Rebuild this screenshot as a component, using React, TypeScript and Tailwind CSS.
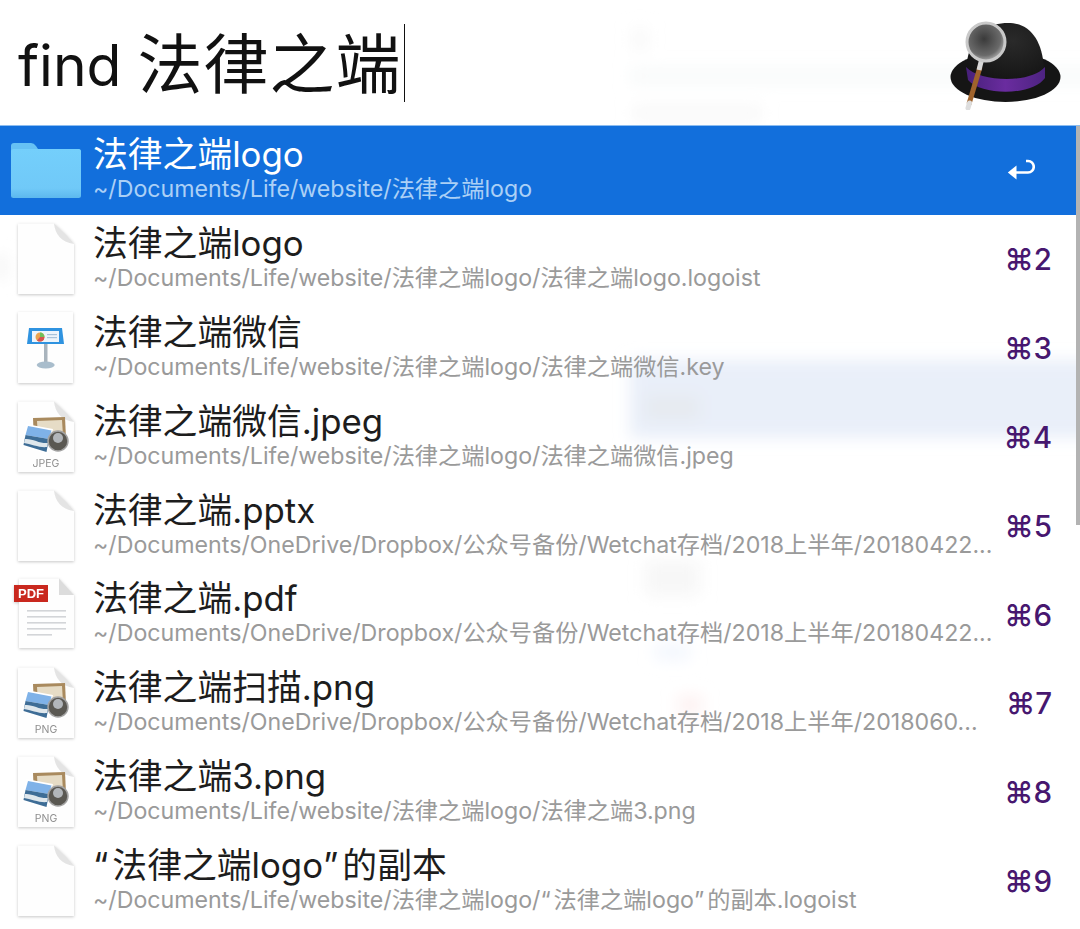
import React from 'react';

const FONT = '[font-family:Inter,"Noto_Sans_CJK_SC",sans-serif]';

type IconKind = 'folder' | 'blank' | 'keynote' | 'jpeg' | 'png' | 'pdf';

const rows: { icon: IconKind; title: React.ReactNode; path: React.ReactNode; key: string }[] = [
  { icon: 'folder', title: '法律之端logo', path: '~/Documents/Life/website/法律之端logo', key: '' },
  { icon: 'blank', title: '法律之端logo', path: '~/Documents/Life/website/法律之端logo/法律之端logo.logoist', key: '⌘2' },
  { icon: 'keynote', title: '法律之端微信', path: '~/Documents/Life/website/法律之端logo/法律之端微信.key', key: '⌘3' },
  { icon: 'jpeg', title: '法律之端微信.jpeg', path: '~/Documents/Life/website/法律之端logo/法律之端微信.jpeg', key: '⌘4' },
  { icon: 'blank', title: '法律之端.pptx', path: '~/Documents/OneDrive/Dropbox/公众号备份/Wetchat存档/2018上半年/20180422...', key: '⌘5' },
  { icon: 'pdf', title: '法律之端.pdf', path: '~/Documents/OneDrive/Dropbox/公众号备份/Wetchat存档/2018上半年/20180422...', key: '⌘6' },
  { icon: 'png', title: '法律之端扫描.png', path: '~/Documents/OneDrive/Dropbox/公众号备份/Wetchat存档/2018上半年/2018060...', key: '⌘7' },
  { icon: 'png', title: '法律之端3.png', path: '~/Documents/Life/website/法律之端logo/法律之端3.png', key: '⌘8' },
  {
    icon: 'blank',
    title: <><span className="tracking-[4px]">“</span>法律之端logo<span className="tracking-[4px]">”</span>的副本</>,
    path: <>~/Documents/Life/website/法律之端logo/<span className="tracking-[3px]">“</span>法律之端logo<span className="tracking-[3px]">”</span>的副本.logoist</>,
    key: '⌘9',
  },
];

const SHADOW = 'overflow-visible drop-shadow-[0_1px_1.5px_rgba(0,0,0,0.22)]';

// blurred desktop showing through the window
function Backdrop() {
  return (
    <svg className="absolute inset-0" width="1080" height="929" viewBox="0 0 1080 929">
      <defs>
        <filter id="soft" x="-30%" y="-30%" width="160%" height="160%">
          <feGaussianBlur stdDeviation="8" />
        </filter>
      </defs>
      <g filter="url(#soft)">
        <rect x="630" y="360" width="470" height="78" fill="#e9eff9" />
        <rect x="645" y="395" width="55" height="25" fill="#e6eaf0" />
        <rect x="632" y="28" width="16" height="22" fill="#f8f8f8" />
        <rect x="630" y="68" width="470" height="16" fill="#f8fafa" />
        <rect x="632" y="106" width="130" height="14" fill="#f8f8f8" />
        <rect x="645" y="560" width="55" height="36" fill="#f7f7f7" />
        <rect x="655" y="645" width="35" height="14" fill="#f1f5fd" />
        <rect x="678" y="696" width="24" height="18" fill="#fdf0f0" />
        <rect x="-4" y="255" width="10" height="24" fill="#f3f3f3" />
      </g>
    </svg>
  );
}

function Sheet({ children }: { children?: React.ReactNode }) {
  return (
    <svg width="60" height="74" viewBox="0 0 60 74" className={SHADOW}>
      <path d="M2 1.5 H38 C44 6 54 16 58 22 V72 H2 Z" fill="#fefefe" />
      <path d="M38 1.5 C39 12 45 20 58 22 C54 16 44 6 38 1.5 Z" fill="#e4e4e4" />
      {children}
    </svg>
  );
}

function PhotoArt() {
  return (
    <g>
      <polygon points="17,18 49,17 50,38 18,42" fill="#a98a5e" />
      <polygon points="21,21 46,20 47,36 22,38" fill="#e6dcc6" />
      <polygon points="10,24 37,29 31,54 6,46" fill="#fff" />
      <polygon points="12,26 35.5,30.5 33,39 9.5,35" fill="#7fb2e8" />
      <polygon points="9.5,35 33,39 30.5,52 7.5,45" fill="#3e6d96" />
      <path d="M9 39 C16 38 24 44 32 43 L31 47 C24 48 15 44 8 43 Z" fill="#dfe7ec" />
      <circle cx="42" cy="41" r="10" fill="#5a5852" stroke="#a3a3a3" strokeWidth="1.5" />
      <circle cx="42" cy="38" r="5" fill="#b2b6ba" />
    </g>
  );
}

function FileIcon({ kind }: { kind: IconKind }) {
  if (kind === 'folder') {
    return (
      <svg width="72" height="58" viewBox="0 0 72 58">
        <defs>
          <linearGradient id="fold" x1="0" y1="0" x2="0" y2="1">
            <stop offset="0" stopColor="#74cffb" />
            <stop offset="0.8" stopColor="#70c9f8" />
            <stop offset="1" stopColor="#5cb8ee" />
          </linearGradient>
        </defs>
        <path d="M1 5 a3 3 0 0 1 3 -3 H21 q3 0 5 3 l2 3 H68 a3 3 0 0 1 3 3 V53 a3 3 0 0 1 -3 3 H4 a3 3 0 0 1 -3 -3 Z" fill="#66c1f4" />
        <rect x="1" y="8" width="70" height="49" rx="2.5" fill="url(#fold)" />
      </svg>
    );
  }
  if (kind === 'keynote') {
    return (
      <svg width="60" height="74" viewBox="0 0 60 74" className={SHADOW}>
        <rect x="2" y="1" width="55" height="71" fill="#fefefe" />
        <path d="M13 17 H46 L48 33 H11 Z" fill="#2f93e0" />
        <rect x="16" y="20" width="27" height="11" fill="#eef5fb" />
        <circle cx="24" cy="26" r="4.5" fill="#e9a34f" />
        <path d="M24 26 V21.5 A4.5 4.5 0 0 1 28.5 26 Z" fill="#6fc05a" />
        <path d="M24 26 H28.5 A4.5 4.5 0 0 1 21 29.4 Z" fill="#d9534f" />
        <rect x="31" y="23" width="10" height="1.2" fill="#a9c3da" />
        <rect x="31" y="26" width="10" height="1.2" fill="#a9c3da" />
        <rect x="28" y="33" width="3.5" height="20" fill="#a9b4bd" />
        <ellipse cx="29.7" cy="54" rx="9" ry="3.5" fill="#a9bdcc" />
      </svg>
    );
  }
  if (kind === 'pdf') {
    return (
      <svg width="60" height="74" viewBox="0 0 60 74" className={SHADOW}>
        <path d="M3 1.5 H43 L58 18 V71 H3 Z" fill="#fefefe" />
        <path d="M43 1.5 L58 18 H43 Z" fill="#dcdcdc" />
        <rect x="-2" y="8" width="34" height="17" fill="#c9281e" />
        <text x="15" y="21" textAnchor="middle" fontSize="13" fontWeight="700" fill="#fff" fontFamily="Liberation Sans Narrow, Liberation Sans, sans-serif">PDF</text>
        {[33, 39, 45, 51].map((y) => (
          <rect key={y} x="11" y={y} width="39" height="1.6" fill="#d3d5d8" />
        ))}
        <rect x="11" y="57" width="25" height="1.6" fill="#d3d5d8" />
      </svg>
    );
  }
  if (kind === 'jpeg' || kind === 'png') {
    return (
      <Sheet>
        <PhotoArt />
        <text x="30" y="67" textAnchor="middle" fontSize="10.5" fill="#8f8f8f" fontFamily="Inter, sans-serif">
          {kind === 'jpeg' ? 'JPEG' : 'PNG'}
        </text>
      </Sheet>
    );
  }
  return <Sheet />;
}

function ReturnArrow() {
  return (
    <svg width="28" height="22" viewBox="0 0 28 22">
      <path d="M19 2 H21 A5.5 5.5 0 0 1 21 13.5 H6" fill="none" stroke="#fff" strokeWidth="2.6" />
      <path d="M0.8 13.5 L9.5 6.5 V20.5 Z" fill="#fff" />
    </svg>
  );
}

function AlfredHat() {
  return (
    <svg width="112" height="90" viewBox="0 0 112 90">
      <defs>
        <radialGradient id="crown" cx="0.6" cy="0.3" r="0.8">
          <stop offset="0" stopColor="#2a2a2a" />
          <stop offset="1" stopColor="#111" />
        </radialGradient>
        <radialGradient id="lens" cx="0.45" cy="0.42" r="0.62">
          <stop offset="0" stopColor="#3a3a3a" />
          <stop offset="0.7" stopColor="#6a6a6a" />
          <stop offset="1" stopColor="#bdbdbd" />
        </radialGradient>
        <linearGradient id="band" x1="0" y1="0" x2="1" y2="0">
          <stop offset="0" stopColor="#47207a" />
          <stop offset="0.5" stopColor="#6a2c9f" />
          <stop offset="1" stopColor="#4d2381" />
        </linearGradient>
      </defs>
      <ellipse cx="55.5" cy="57" rx="55" ry="25" fill="#151515" />
      <path d="M16 48 C20 10 40 3 58 3 C80 3 92 20 94 48 C80 68 32 68 16 48 Z" fill="url(#crown)" />
      <path d="M16 47 C30 62 80 64 95 47 L95 58 C82 76 32 76 18 60 Z" fill="url(#band)" />
      <path d="M30 47 L19 84" stroke="#a0632c" strokeWidth="5" />
      <path d="M19.5 83 L18 88" stroke="#ddd" strokeWidth="5" strokeLinecap="round" />
      <path d="M32 38 L29 50" stroke="#d8d8d8" strokeWidth="5" />
      <circle cx="36" cy="22" r="19" fill="url(#lens)" stroke="#c9c9c9" strokeWidth="3" />
    </svg>
  );
}

function ResultRow({ icon, title, path, shortcut, active }: { icon: IconKind; title: React.ReactNode; path: React.ReactNode; shortcut: string; active: boolean }) {
  return (
    <div className={`flex h-[88.8px] items-center ${active ? 'bg-[#126fdc]' : ''}`}>
      <div className={`flex w-[93px] shrink-0 justify-start ${icon === 'folder' ? 'pl-[10px]' : 'pl-[16px]'}`}>
        <FileIcon kind={icon} />
      </div>
      <div className="min-w-0 flex-1 -mt-[1px] flex flex-col gap-[1px]">
        <div className={`text-[34.8px] leading-[39px] whitespace-nowrap ${active ? 'text-white' : 'text-[#1d1d1d]'}`}>{title}</div>
        <div className={`text-[23.2px] leading-[29px] whitespace-nowrap ${active ? 'text-[#abd0f6]' : 'text-[#9a9a9a]'}`}>{path}</div>
      </div>
      <div className={`flex w-[77px] shrink-0 justify-end pr-[28px] text-[29.5px] leading-none font-medium ${active ? 'text-white' : 'text-[#47176f]'}`}>
        {active ? <span className="mr-[17px]"><ReturnArrow /></span> : <span className="mt-[2px]">{shortcut}</span>}
      </div>
    </div>
  );
}

export default function App() {
  return (
    <div className={`relative h-[929px] w-[1080px] overflow-hidden bg-white ${FONT}`}>
      <Backdrop />

      <div className="relative flex h-[125px] items-center justify-between pl-[18px] pr-[18px]">
        <div className="flex items-center whitespace-pre leading-none text-[#111]">
          <span className="mt-[6px] text-[57px]">find </span>
          <span className="mt-[3px] text-[65px] tracking-[1px]">法律之端</span>
          <span className="ml-[2px] h-[78px] w-[1px] bg-[#111]" />
        </div>
        <span className="mt-[5px]"><AlfredHat /></span>
      </div>

      <div className="relative border-t border-[#8dbdf0]">
        {rows.map((r, i) => (
          <ResultRow key={i} icon={r.icon} title={r.title} path={r.path} shortcut={r.key} active={i === 0} />
        ))}
      </div>

      <div className="absolute right-0 top-[126px] h-[399px] w-[4px] bg-[#b3b3b3]" />
    </div>
  );
}
